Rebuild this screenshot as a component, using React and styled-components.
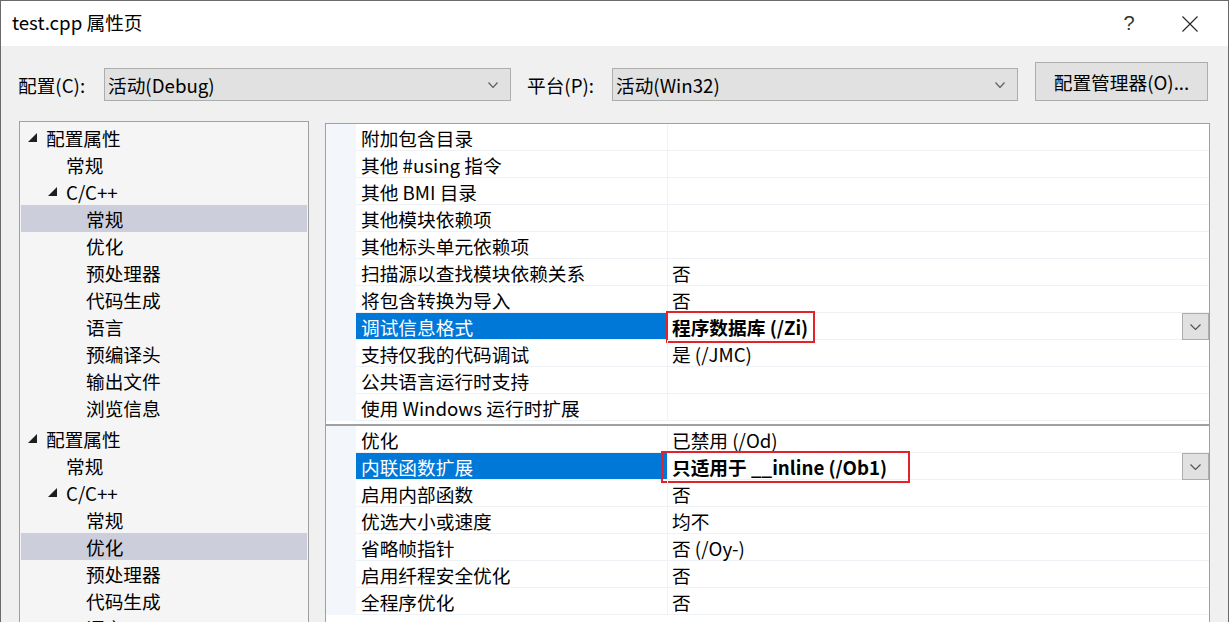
import React from "react";
import styled, { createGlobalStyle } from "styled-components";

const Global = createGlobalStyle`
  html, body { margin: 0; padding: 0; background: #f0f0f0; }
  body {
    font-family: "Noto Sans CJK SC", "Noto Sans", "Liberation Sans", sans-serif;
    font-size: 18.7px;
    color: #000;
  }
  * { box-sizing: border-box; }
`;

const Window = styled.div`
  width: 1229px;
  height: 622px;
  overflow: hidden;
  background: #f0f0f0;
  border: 1px solid #6a6a6a;
  border-bottom: none;
  display: flex;
  flex-direction: column;
`;

const TitleBar = styled.div`
  height: 45px;
  flex: none;
  background: #fff;
  display: flex;
  align-items: center;
  padding-left: 11px;
`;

const Title = styled.div`
  font-size: 18.7px;
  line-height: 1;
  margin-top: -2px;
`;

const TitleButtons = styled.div`
  margin-left: auto;
  display: flex;
  align-items: center;
  height: 100%;
`;

const TitleButton = styled.div`
  width: ${(p) => p.w}px;
  height: 100%;
  display: flex;
  align-items: center;
  justify-content: center;
  color: #333;
  font-family: "Liberation Sans", sans-serif;
  font-size: 20px;
  font-weight: 300;
`;

const Toolbar = styled.div`
  flex: none;
  display: flex;
  align-items: flex-end;
  padding: 17px 0 0 17px;
  height: 55px;
`;

const Label = styled.div`
  width: ${(p) => p.w}px;
  height: 33px;
  display: flex;
  align-items: center;
  flex: none;
`;

const Combo = styled.div`
  width: ${(p) => p.w}px;
  height: 33px;
  flex: none;
  background: #e1e1e1;
  border: 1px solid #adadad;
  display: flex;
  align-items: center;
  padding: 0 12px 0 3px;
`;

const ComboText = styled.span`
  flex: 1;
`;

const Spacer = styled.div`
  width: ${(p) => p.w}px;
  flex: none;
`;

const Button = styled.div`
  width: 173px;
  height: 39px;
  flex: none;
  background: #e1e1e1;
  border: 1px solid #adadad;
  display: flex;
  align-items: center;
  justify-content: center;
`;

const Content = styled.div`
  flex: 1;
  display: flex;
  align-items: flex-start;
  padding: 20px 0 0 18px;
  min-height: 0;
`;

const Tree = styled.div`
  width: 290px;
  height: 520px;
  flex: none;
  background: #f5f5f5;
  border: 1px solid #a0a0a0;
  padding: 2px 1px 0 1px;
`;

const TreeGroup = styled.div`
  margin-top: ${(p) => p.gap}px;
`;

const TreeRow = styled.div`
  height: 27px;
  display: flex;
  align-items: center;
  padding-left: ${(p) => 7 + p.level * 20}px;
  background: ${(p) => (p.selected ? "#cccedb" : "transparent")};
  white-space: nowrap;
`;

const Expander = styled.span`
  width: 18px;
  flex: none;
  display: flex;
  align-items: center;
`;

const Grid = styled.div`
  width: 885px;
  flex: none;
  margin-left: 16px;
  margin-top: 2px;
  display: flex;
  flex-direction: column;
`;

const Panel = styled.div`
  border: 1px solid #a0a0a0;
  border-bottom: ${(p) => (p.last ? "none" : "1px solid #a0a0a0")};
  background: #fff;
  padding-bottom: ${(p) => (p.last ? 10 : 3)}px;
  display: flex;
  flex-direction: column;
`;

const Row = styled.div`
  height: 27px;
  display: flex;
`;

const Gutter = styled.div`
  width: 30px;
  flex: none;
  background: #f3f6fa;
`;

const NameCell = styled.div`
  width: 311px;
  flex: none;
  display: flex;
  align-items: center;
  padding-left: 5px;
  border-bottom: 1px solid #eef2f6;
  background: ${(p) => (p.selected ? "#0078d7" : "#fff")};
  color: ${(p) => (p.selected ? "#fff" : "#000")};
  white-space: nowrap;
`;

const ValueCell = styled.div`
  flex: 1;
  position: relative;
  display: flex;
  align-items: center;
  padding-left: 4px;
  border-left: 1px solid #f0f2f5;
  border-bottom: 1px solid #eef2f6;
  font-weight: ${(p) => (p.bold ? 700 : 400)};
  white-space: nowrap;
`;

const DropButton = styled.div`
  position: absolute;
  right: 0;
  top: 0;
  width: 27px;
  height: 27px;
  background: #e1e1e1;
  border: 1px solid #adadad;
  display: flex;
  align-items: center;
  justify-content: center;
`;

const Highlight = styled.div`
  position: absolute;
  left: ${(p) => p.left}px;
  top: -2px;
  width: ${(p) => p.w}px;
  height: 32px;
  border: 2px solid #e3232b;
  pointer-events: none;
`;

const Triangle = () => (
  <svg width="9" height="9" viewBox="0 0 9 9">
    <polygon points="9,0 9,9 0,9" fill="#1e1e1e" />
  </svg>
);

const Chevron = ({ w = 10, h = 6, color = "#606060" }) => (
  <svg width={w} height={h} viewBox={`0 0 ${w} ${h}`}>
    <polyline
      points={`0.5,0.5 ${w / 2},${h - 0.5} ${w - 0.5},0.5`}
      fill="none"
      stroke={color}
      strokeWidth="1.2"
    />
  </svg>
);

const treeGroups = [
  [
    { t: "配置属性", level: 0, exp: true },
    { t: "常规", level: 1 },
    { t: "C/C++", level: 1, exp: true },
    { t: "常规", level: 2, sel: true },
    { t: "优化", level: 2 },
    { t: "预处理器", level: 2 },
    { t: "代码生成", level: 2 },
    { t: "语言", level: 2 },
    { t: "预编译头", level: 2 },
    { t: "输出文件", level: 2 },
    { t: "浏览信息", level: 2 },
  ],
  [
    { t: "配置属性", level: 0, exp: true },
    { t: "常规", level: 1 },
    { t: "C/C++", level: 1, exp: true },
    { t: "常规", level: 2 },
    { t: "优化", level: 2, sel: true },
    { t: "预处理器", level: 2 },
    { t: "代码生成", level: 2 },
    { t: "语言", level: 2 },
  ],
];

const panels = [
  [
    { n: "附加包含目录", v: "" },
    { n: "其他 #using 指令", v: "" },
    { n: "其他 BMI 目录", v: "" },
    { n: "其他模块依赖项", v: "" },
    { n: "其他标头单元依赖项", v: "" },
    { n: "扫描源以查找模块依赖关系", v: "否" },
    { n: "将包含转换为导入", v: "否" },
    { n: "调试信息格式", v: "程序数据库 (/Zi)", sel: true, box: { left: -2, w: 149 } },
    { n: "支持仅我的代码调试", v: "是 (/JMC)" },
    { n: "公共语言运行时支持", v: "" },
    { n: "使用 Windows 运行时扩展", v: "" },
  ],
  [
    { n: "优化", v: "已禁用 (/Od)" },
    { n: "内联函数扩展", v: "只适用于 __inline (/Ob1)", sel: true, box: { left: -7, w: 249 } },
    { n: "启用内部函数", v: "否" },
    { n: "优选大小或速度", v: "均不" },
    { n: "省略帧指针", v: "否 (/Oy-)" },
    { n: "启用纤程安全优化", v: "否" },
    { n: "全程序优化", v: "否" },
  ],
];

export default function App() {
  return (
    <>
      <Global />
      <Window>
        <TitleBar>
          <Title>test.cpp 属性页</Title>
          <TitleButtons>
            <TitleButton w={46}>?</TitleButton>
            <TitleButton w={76}>
              <svg width="16" height="16" viewBox="0 0 16 16">
                <path d="M0.5 0.5 L15.5 15.5 M15.5 0.5 L0.5 15.5" stroke="#222" strokeWidth="1.1" />
              </svg>
            </TitleButton>
          </TitleButtons>
        </TitleBar>
        <Toolbar>
          <Label w={86}>配置(C):</Label>
          <Combo w={407}>
            <ComboText>活动(Debug)</ComboText>
            <Chevron />
          </Combo>
          <Spacer w={16} />
          <Label w={85}>平台(P):</Label>
          <Combo w={406}>
            <ComboText>活动(Win32)</ComboText>
            <Chevron />
          </Combo>
          <Spacer w={17} />
          <Button>配置管理器(O)...</Button>
        </Toolbar>
        <Content>
          <Tree>
            {treeGroups.map((g, gi) => (
              <TreeGroup key={gi} gap={gi === 0 ? 0 : 4}>
                {g.map((r, i) => (
                  <TreeRow key={i} level={r.level} selected={r.sel}>
                    <Expander>{r.exp ? <Triangle /> : null}</Expander>
                    {r.t}
                  </TreeRow>
                ))}
              </TreeGroup>
            ))}
          </Tree>
          <Grid>
            {panels.map((p, pi) => (
              <Panel key={pi} last={pi === panels.length - 1}>
                {p.map((r, i) => (
                  <Row key={i}>
                    <Gutter />
                    <NameCell selected={r.sel}>{r.n}</NameCell>
                    <ValueCell bold={r.sel}>
                      {r.v}
                      {r.sel ? (
                        <DropButton>
                          <Chevron w={11} h={6} color="#555" />
                        </DropButton>
                      ) : null}
                      {r.box ? <Highlight left={r.box.left} w={r.box.w} /> : null}
                    </ValueCell>
                  </Row>
                ))}
              </Panel>
            ))}
          </Grid>
        </Content>
      </Window>
    </>
  );
}
